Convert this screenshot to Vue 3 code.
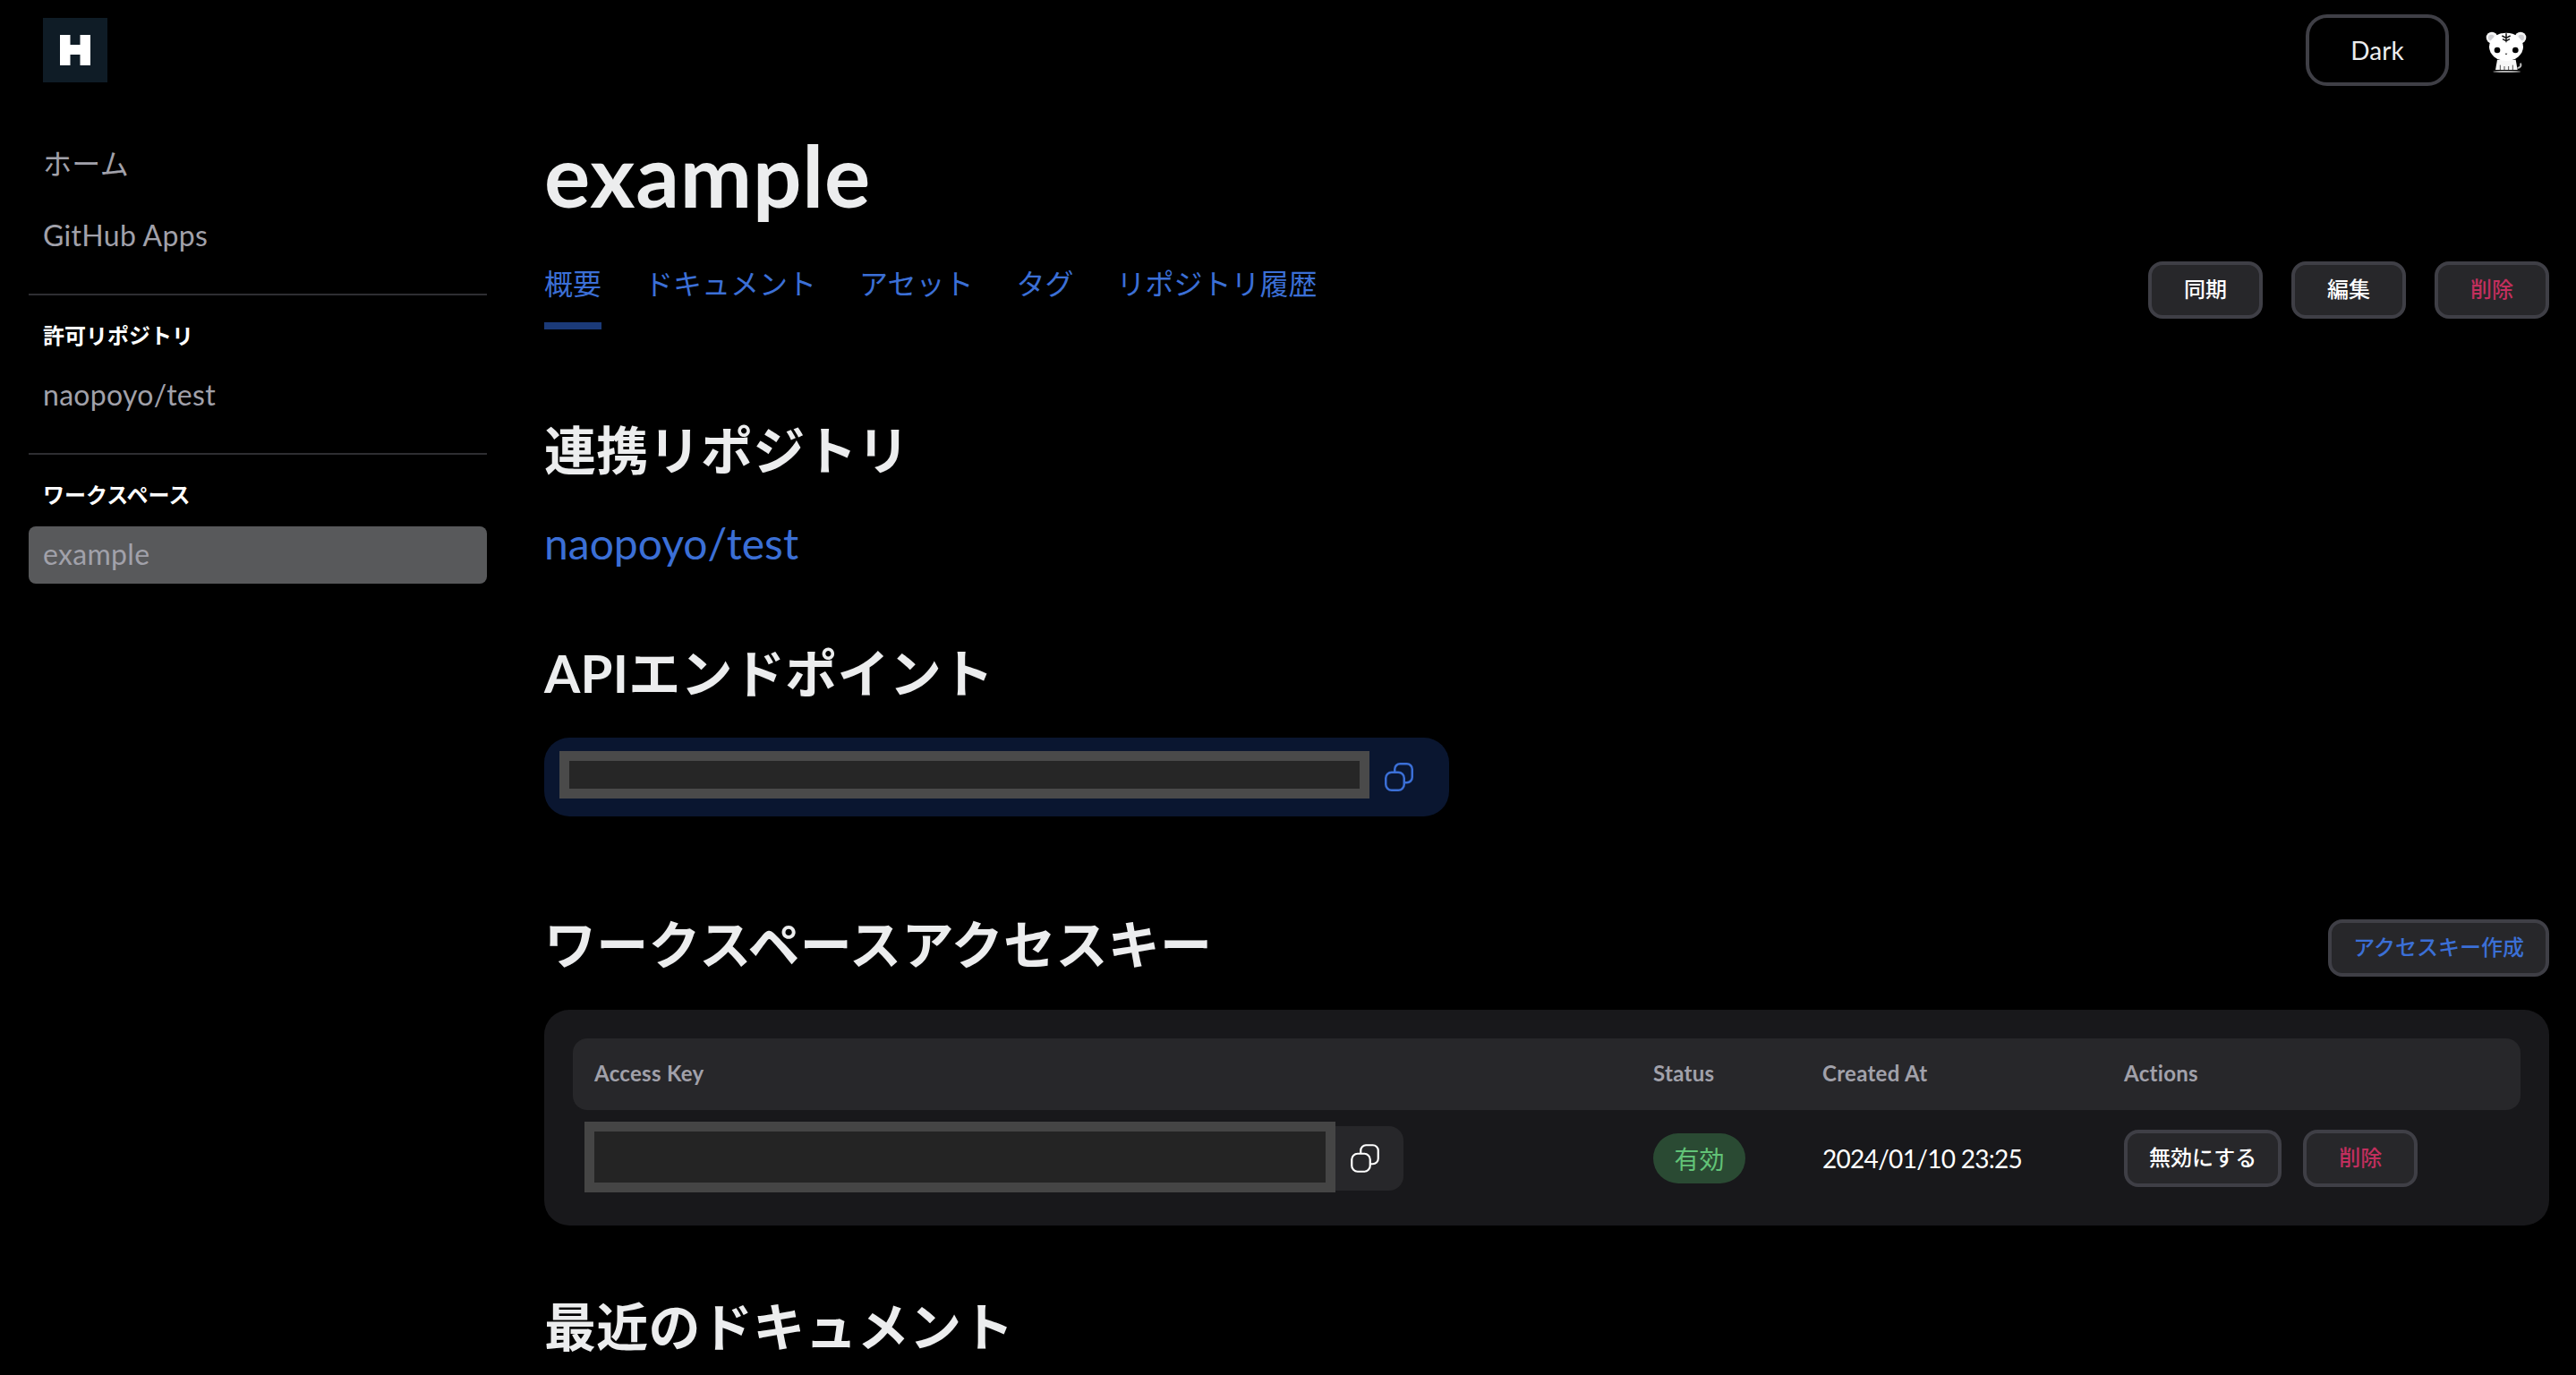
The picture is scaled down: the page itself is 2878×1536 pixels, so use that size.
<script setup>
const tabs = ['概要', 'ドキュメント', 'アセット', 'タグ', 'リポジトリ履歴']
</script>

<template>
  <div class="page">
    <header class="topbar">
      <div class="logo">
        <svg width="34" height="34" viewBox="0 0 34 34"><path d="M0 0h11.5v11h11V0H34v34H22.5V22h-11v12H0z" fill="#fff"/></svg>
      </div>
      <div class="top-right">
        <button class="theme-btn">Dark</button>
        <svg class="tiger" width="80" height="70" viewBox="0 0 240 210">
          <ellipse cx="122" cy="180" rx="46" ry="3" fill="#aaa"/>
          <path d="M158 168c10-1 13-8 10-16" stroke="#bbb" stroke-width="6" fill="none"/>
          <circle cx="72" cy="66" r="19" fill="#f4f4f4"/>
          <circle cx="168" cy="66" r="19" fill="#f4f4f4"/>
          <circle cx="70" cy="66" r="10" fill="#cfcfd3"/>
          <circle cx="170" cy="66" r="10" fill="#cfcfd3"/>
          <path d="M90 140h62l6 34H84z" fill="#f6f6f6"/>
          <ellipse cx="120" cy="97" rx="57" ry="47" fill="#fff"/>
          <path d="M120 52v30M106 60l14 7 14-7M108 71l12 6 12-6" stroke="#111" stroke-width="4.5" fill="none"/>
          <circle cx="90" cy="108" r="10" fill="#000"/>
          <circle cx="151" cy="108" r="10" fill="#000"/>
          <path d="M116 119h8l-4 5z" fill="#000"/>
          <path d="M100 158v16M114 162v12M128 162v12M142 158v16" stroke="#333" stroke-width="2.5"/>
        </svg>
      </div>
    </header>

    <div class="layout">
      <aside class="sidebar">
        <nav class="nav">
          <a class="nav-item">ホーム</a>
          <a class="nav-item">GitHub Apps</a>
        </nav>
        <hr class="divider" />
        <div class="nav-label">許可リポジトリ</div>
        <a class="nav-item">naopoyo/test</a>
        <hr class="divider" />
        <div class="nav-label">ワークスペース</div>
        <a class="nav-item active">example</a>
      </aside>

      <main class="main">
        <h1 class="title">example</h1>

        <div class="tabs-row">
          <div class="tabs">
            <a v-for="(t, i) in tabs" :key="t" class="tab" :class="{ selected: i === 0 }">{{ t }}</a>
          </div>
          <div class="actions">
            <button class="btn">同期</button>
            <button class="btn">編集</button>
            <button class="btn danger">削除</button>
          </div>
        </div>

        <h2 class="heading first">連携リポジトリ</h2>
        <a class="repo-link">naopoyo/test</a>

        <h2 class="heading api">APIエンドポイント</h2>
        <div class="endpoint">
          <div class="mask endpoint-mask"></div>
          <svg class="copy" width="32" height="32" viewBox="0 0 32 32" fill="none" stroke="#3b6fd6" stroke-width="2.5">
            <rect x="1.25" y="10.75" width="20.5" height="20" rx="6.5" />
            <path d="M11.25 10.5V7.25a6 6 0 0 1 6-6h7.5a6 6 0 0 1 6 6v9a6 6 0 0 1-6 6H22" />
          </svg>
        </div>

        <div class="keys-head">
          <h2 class="heading keys-title">ワークスペースアクセスキー</h2>
          <button class="btn primary">アクセスキー作成</button>
        </div>

        <div class="card">
          <div class="table-head">
            <div>Access Key</div>
            <div>Status</div>
            <div>Created At</div>
            <div>Actions</div>
          </div>
          <div class="table-row">
            <div class="key-cell">
              <div class="snippet">
                <div class="mask snippet-mask"></div>
                <svg class="copy" width="32" height="32" viewBox="0 0 32 32" fill="none" stroke="#fff" stroke-width="2.2">
                  <rect x="1.25" y="10.75" width="20.5" height="20" rx="6.5" />
                  <path d="M11.25 10.5V7.25a6 6 0 0 1 6-6h7.5a6 6 0 0 1 6 6v9a6 6 0 0 1-6 6H22" />
                </svg>
              </div>
            </div>
            <div><span class="badge">有効</span></div>
            <div class="date">2024/01/10 23:25</div>
            <div class="row-actions">
              <button class="btn">無効にする</button>
              <button class="btn danger">削除</button>
            </div>
          </div>
        </div>

        <h2 class="heading recent">最近のドキュメント</h2>
      </main>
    </div>
  </div>
</template>

<style>
html, body { margin: 0; background: #000; }
</style>

<style scoped>
.page {
  width: 2878px;
  height: 1536px;
  overflow: hidden;
  background: #000;
  color: #ecedee;
  font-family: Lato, "Noto Sans CJK JP", sans-serif;
}
.topbar {
  height: 112px;
  box-sizing: border-box;
  display: flex;
  justify-content: space-between;
  align-items: flex-start;
  padding: 16px 38px 0 48px;
}
.logo {
  width: 72px;
  height: 72px;
  margin-top: 4px;
  background: #0f1c26;
  display: flex;
  align-items: center;
  justify-content: center;
}
.top-right { display: flex; align-items: center; gap: 24px; }
.theme-btn {
  width: 160px;
  height: 80px;
  box-sizing: border-box;
  border: 4px solid #3f3f46;
  border-radius: 24px;
  background: #000;
  color: #ecedee;
  font: 400 28px Lato, "Noto Sans CJK JP", sans-serif;
}
.tiger { margin-top: -2px; }
.layout { display: flex; padding-left: 32px; }
.sidebar { width: 512px; flex: none; padding-top: 38px; margin-right: 64px; }
.nav { display: flex; flex-direction: column; gap: 18px; }
.nav-item {
  display: flex;
  align-items: center;
  height: 64px;
  box-sizing: border-box;
  padding: 0 0 3px 16px;
  font-size: 32px;
  font-weight: 400;
  letter-spacing: 0.3px;
  color: #a1a1aa;
  border-radius: 8px;
}
.nav-item.active { background: #58595b; }
.divider { height: 2px; border: 0; margin: 32px 0 0; background: #2e2e32; }
.nav-label {
  margin: 28px 0 18px;
  padding-left: 16px;
  height: 34px;
  line-height: 34px;
  font-size: 24px;
  font-weight: 700;
  color: #fff;
}
.main { width: 2240px; flex: none; }
.title {
  margin: 0;
  height: 182px;
  line-height: 182px;
  margin-top: -8px;
  font-size: 96px;
  font-weight: 700;
  letter-spacing: 0.8px;
  color: #ecedee;
}
.tabs-row { display: flex; justify-content: space-between; align-items: flex-start; margin-top: 6px; }
.tabs { display: flex; gap: 48px; padding-top: 1px; }
.tab {
  display: block;
  height: 67px;
  line-height: 48px;
  border-bottom: 8px solid transparent;
  font-size: 32px;
  color: #3b6fd6;
}
.tab.selected { border-bottom-color: #1b3a78; }
.actions { display: flex; gap: 32px; }
.btn {
  min-width: 128px;
  height: 64px;
  box-sizing: border-box;
  padding: 0 24px 6px;
  border: 4px solid #3f3f46;
  border-radius: 16px;
  background: #27272a;
  color: #fff;
  font: 500 24px Lato, "Noto Sans CJK JP", sans-serif;
}
.btn.danger { color: #c22f5e; }
.btn.primary { color: #3b6fd6; }
.heading {
  margin: 0;
  height: 72px;
  line-height: 72px;
  font-size: 58px;
  font-weight: 700;
  letter-spacing: 0.3px;
  color: #ecedee;
}
.heading.first { margin-top: 99px; }
.repo-link {
  display: block;
  margin-top: 32px;
  height: 72px;
  line-height: 72px;
  font-size: 48px;
  font-weight: 400;
  color: #3b6fd6;
}
.heading.api { margin-top: 73px; }
.endpoint {
  position: relative;
  width: 1011px;
  height: 88px;
  margin-top: 36px;
  background: #0a1630;
  border-radius: 28px;
}
.mask { position: absolute; box-sizing: border-box; border: 11px solid #4a4a4a; background: #262626; }
.endpoint-mask { left: 17px; top: 15px; width: 905px; height: 53px; }
.copy { position: absolute; }
.endpoint .copy { left: 939px; top: 28px; }
.keys-head {
  display: flex;
  justify-content: space-between;
  align-items: center;
  height: 64px;
  margin-top: 115px;
}
.keys-title { margin-top: -8px; }
.card {
  margin-top: 37px;
  height: 241px;
  box-sizing: border-box;
  padding: 32px;
  background: #18181b;
  border-radius: 28px;
}
.table-head, .table-row {
  display: grid;
  grid-template-columns: 1183px 189px 337px 1fr;
  align-items: center;
}
.table-head {
  height: 80px;
  background: #27272a;
  border-radius: 16px;
  font-size: 24px;
  font-weight: 700;
  letter-spacing: 0.3px;
  color: #a1a1aa;
}
.table-head > div { padding: 0 0 4px 24px; }
.table-row { height: 84px; margin-top: 12px; }
.table-row > div { padding-left: 24px; }
.table-row > .key-cell { padding-left: 13px; }
.snippet {
  position: relative;
  width: 915px;
  height: 72px;
  background: #27272a;
  border-radius: 16px;
}
.snippet-mask { left: 0; top: -5px; width: 839px; height: 79px; border-color: #454545; background: #242424; }
.snippet .copy { left: 856px; top: 20px; }
.badge {
  display: inline-flex;
  align-items: center;
  justify-content: center;
  width: 103px;
  height: 56px;
  border-radius: 28px;
  background: #2a4a33;
  color: #62c377;
  font-size: 28px;
}
.date { font-size: 28px; letter-spacing: -0.7px; color: #fff; }
.row-actions { display: flex; gap: 24px; }
.heading.recent { margin-top: 77px; }
</style>
